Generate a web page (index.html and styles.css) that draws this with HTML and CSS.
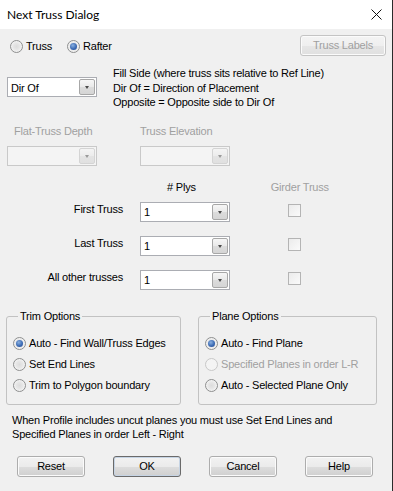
FILE: index.html
```html
<!DOCTYPE html>
<html lang="en">
<head>
    <meta charset="UTF-8">
    <title>Next Truss Dialog</title>
    <link rel="stylesheet" href="styles.css">
</head>
<body>

    <div class="window">
        <div class="titlebar">
            <span class="title">Next Truss Dialog</span>
            <svg class="close" width="11" height="11" viewBox="0 0 11 11">
                <path d="M0.5 0.5 L10.5 10.5 M10.5 0.5 L0.5 10.5" stroke="#111" stroke-width="1" fill="none"/>
            </svg>
        </div>

        <div class="content">
            <div class="row-top">
                <label class="radio first"><span class="dot"></span>Truss</label>
                <label class="radio checked"><span class="dot"></span>Rafter</label>
                <button class="btn btn-labels" disabled>Truss Labels</button>
            </div>

            <div class="row-fill">
                <div class="combo combo-dir"><span class="value">Dir Of</span><span class="arrow"></span></div>
                <div class="fill-text">
                    Fill Side (where truss sits relative to Ref Line)<br>
                    Dir Of = Direction of Placement<br>
                    Opposite = Opposite side to Dir Of
                </div>
            </div>

            <div class="row-flat">
                <div class="field">
                    <div class="muted field-label">Flat-Truss Depth</div>
                    <div class="combo disabled"><span class="value"></span><span class="arrow"></span></div>
                </div>
                <div class="field field-right">
                    <div class="muted field-label">Truss Elevation</div>
                    <div class="combo disabled"><span class="value"></span><span class="arrow"></span></div>
                </div>
            </div>

            <div class="plys">
                <div class="ply-head">
                    <span class="head-plys"># Plys</span>
                    <span class="muted head-girder">Girder Truss</span>
                </div>
                <div class="ply-row">
                    <span class="ply-label">First Truss</span>
                    <div class="combo"><span class="value">1</span><span class="arrow"></span></div>
                    <span class="check"></span>
                </div>
                <div class="ply-row">
                    <span class="ply-label">Last Truss</span>
                    <div class="combo"><span class="value">1</span><span class="arrow"></span></div>
                    <span class="check"></span>
                </div>
                <div class="ply-row">
                    <span class="ply-label">All other trusses</span>
                    <div class="combo"><span class="value">1</span><span class="arrow"></span></div>
                    <span class="check"></span>
                </div>
            </div>

            <div class="groups">
                <fieldset class="group group-trim">
                    <legend>Trim Options</legend>
                    <label class="radio checked"><span class="dot"></span>Auto - Find Wall/Truss Edges</label>
                    <label class="radio"><span class="dot"></span>Set End Lines</label>
                    <label class="radio"><span class="dot"></span>Trim to Polygon boundary</label>
                </fieldset>
                <fieldset class="group group-plane">
                    <legend>Plane Options</legend>
                    <label class="radio checked"><span class="dot"></span>Auto - Find Plane</label>
                    <label class="radio disabled"><span class="dot"></span>Specified Planes in order L-R</label>
                    <label class="radio"><span class="dot"></span>Auto - Selected Plane Only</label>
                </fieldset>
            </div>

            <p class="note">
                When Profile includes uncut planes you must use Set End Lines and<br>
                Specified Planes in order Left - Right
            </p>

            <div class="buttons">
                <button class="btn">Reset</button>
                <button class="btn btn-default">OK</button>
                <button class="btn">Cancel</button>
                <button class="btn">Help</button>
            </div>
        </div>
    </div>

</body>
</html>
```

FILE: styles.css
```css
body {
    margin: 0;
    background: #3a3a3a;
    font-family: "Liberation Sans", Arial, sans-serif;
    font-size: 11px;
    letter-spacing: -0.2px;
    color: #000;
}

.window {
    width: 392px;
    height: 491px;
    background: #f0f0f0;
    border-right: 1px solid #2b2b2b;
}

.titlebar {
    height: 29px;
    background: #fff;
    display: flex;
    align-items: center;
    justify-content: space-between;
    padding: 0 10px 0 7px;
}

.title {
    font-family: Lato, "Noto Sans", sans-serif;
    font-size: 12px;
    letter-spacing: 0;
    color: #000;
    margin-top: -1px;
}

.close {
    margin-top: -1px;
}

.content {
    padding: 0 6px 0 7px;
    line-height: 15px;
}

.muted {
    color: #a0a0a0;
}

/* radios */
.radio {
    display: flex;
    align-items: center;
    height: 21px;
}

.dot {
    width: 11px;
    height: 11px;
    border: 1px solid #8e8f8f;
    border-radius: 50%;
    background: radial-gradient(circle at 50% 50%, #dcdcdc 0, #e6e6e6 40%, #f6f6f6 80%, #fff 100%);
    margin-right: 3px;
    position: relative;
    flex: none;
}

.radio.checked .dot::after {
    content: "";
    position: absolute;
    left: 2px;
    top: 2px;
    width: 7px;
    height: 7px;
    border-radius: 50%;
    background: radial-gradient(circle at 40% 35%, #8ab0e0 0, #3d6cb5 55%, #24468c 100%);
}

.radio.disabled {
    color: #a0a0a0;
}

.radio.disabled .dot {
    border-color: #c8c8c8;
    background: #f4f4f4;
}

/* top row */
.row-top {
    display: flex;
    align-items: center;
    height: 22px;
    padding-top: 5px;
}

.row-top .radio {
    margin-top: 3px;
    margin-left: 3px;
}

.row-top .radio.first {
    width: 57px;
}

.row-top .radio:not(.first) {
    margin-left: 0;
}

.btn-labels {
    margin-left: auto;
    width: 86px;
    height: 22px;
}

/* combos */
.combo {
    width: 90px;
    height: 20px;
    box-sizing: border-box;
    background: #fff;
    border: 1px solid #abadb3;
    display: flex;
    align-items: center;
    justify-content: space-between;
    padding: 0 1px 0 3px;
}

.combo .value {
    line-height: 15px;
    margin-top: 2px;
}

.arrow {
    width: 16px;
    height: 16px;
    box-sizing: border-box;
    border: 1px solid #a7a7a7;
    border-radius: 2px;
    background: linear-gradient(#f6f6f6, #e9e9e9 50%, #dcdcdc 51%, #d5d5d5);
    position: relative;
}

.arrow::after {
    content: "";
    position: absolute;
    left: 5px;
    top: 6px;
    border-left: 2.5px solid transparent;
    border-right: 2.5px solid transparent;
    border-top: 3px solid #4a4a4a;
}

.combo.disabled {
    background: #f4f4f4;
    border-color: #c9c9c9;
}

.combo.disabled .arrow {
    border-color: #d4d4d4;
    background: linear-gradient(#f4f4f4, #ececec 50%, #e4e4e4 51%, #e0e0e0);
}

.combo.disabled .arrow::after {
    border-top-color: #9a9a9a;
}

/* fill side */
.row-fill {
    display: flex;
    align-items: flex-start;
    margin-top: 10px;
}

.combo-dir {
    margin-top: 11px;
}

.fill-text {
    margin-left: 16px;
    line-height: 14.5px;
}

/* flat truss */
.row-flat {
    display: flex;
    margin-top: 14px;
}

.field-label {
    margin-left: 7px;
}

.field .combo {
    margin-top: 7px;
}

.field-right {
    margin-left: 43px;
}

.field-right .field-label {
    margin-left: 0;
}

/* plys */
.plys {
    margin-top: 14px;
}

.ply-head {
    display: flex;
    height: 15px;
}

.head-plys {
    margin-left: 160px;
}

.head-girder {
    margin-left: 75px;
}

.ply-row {
    display: flex;
    align-items: flex-start;
    margin-top: 14px;
}

.ply-head + .ply-row {
    margin-top: 7px;
}

.ply-label {
    width: 116px;
    text-align: right;
}

.ply-row .combo {
    margin-left: 17px;
}

.check {
    width: 13px;
    height: 13px;
    box-sizing: border-box;
    border: 1px solid #b4b4b4;
    background: linear-gradient(135deg, #ebebeb, #fafafa);
    margin-left: 58px;
    margin-top: 2px;
}

/* group boxes */
.groups {
    display: flex;
    margin-top: 19px;
    margin-left: -1px;
}

.group {
    margin: 0;
    padding: 9px 0 7px 6px;
    border: 1px solid #c2c2c2;
    border-radius: 3px;
    box-sizing: border-box;
    height: 96px;
}

.group legend {
    padding: 0 2px;
    margin-left: 5px;
    line-height: 15px;
}

.group-trim {
    width: 175px;
}

.group-plane {
    width: 179px;
    margin-left: 17px;
}

/* note */
.note {
    margin: 8px 0 0 5px;
    line-height: 14px;
}

/* buttons */
.btn {
    font-family: inherit;
    font-size: 11px;
    letter-spacing: -0.2px;
    color: #000;
    height: 21px;
    box-sizing: border-box;
    border: 1px solid #adadad;
    border-radius: 3px;
    background: linear-gradient(#f2f2f2, #ebebeb 50%, #dddddd 51%, #cfcfcf);
    box-shadow: inset 0 0 0 1px #fbfbfb;
    padding: 0;
}

.btn:disabled {
    color: #a0a0a0;
    border-color: #c4c4c4;
    background: linear-gradient(#f4f4f4, #efefef 50%, #e6e6e6 51%, #e0e0e0);
}

.buttons {
    display: flex;
    gap: 28px;
    margin: 15px 0 0 10px;
}

.buttons .btn {
    width: 68px;
}

.btn-default {
    border-color: #6a6a6a;
    box-shadow: inset 0 0 0 1px #c6d4e4;
}
```
